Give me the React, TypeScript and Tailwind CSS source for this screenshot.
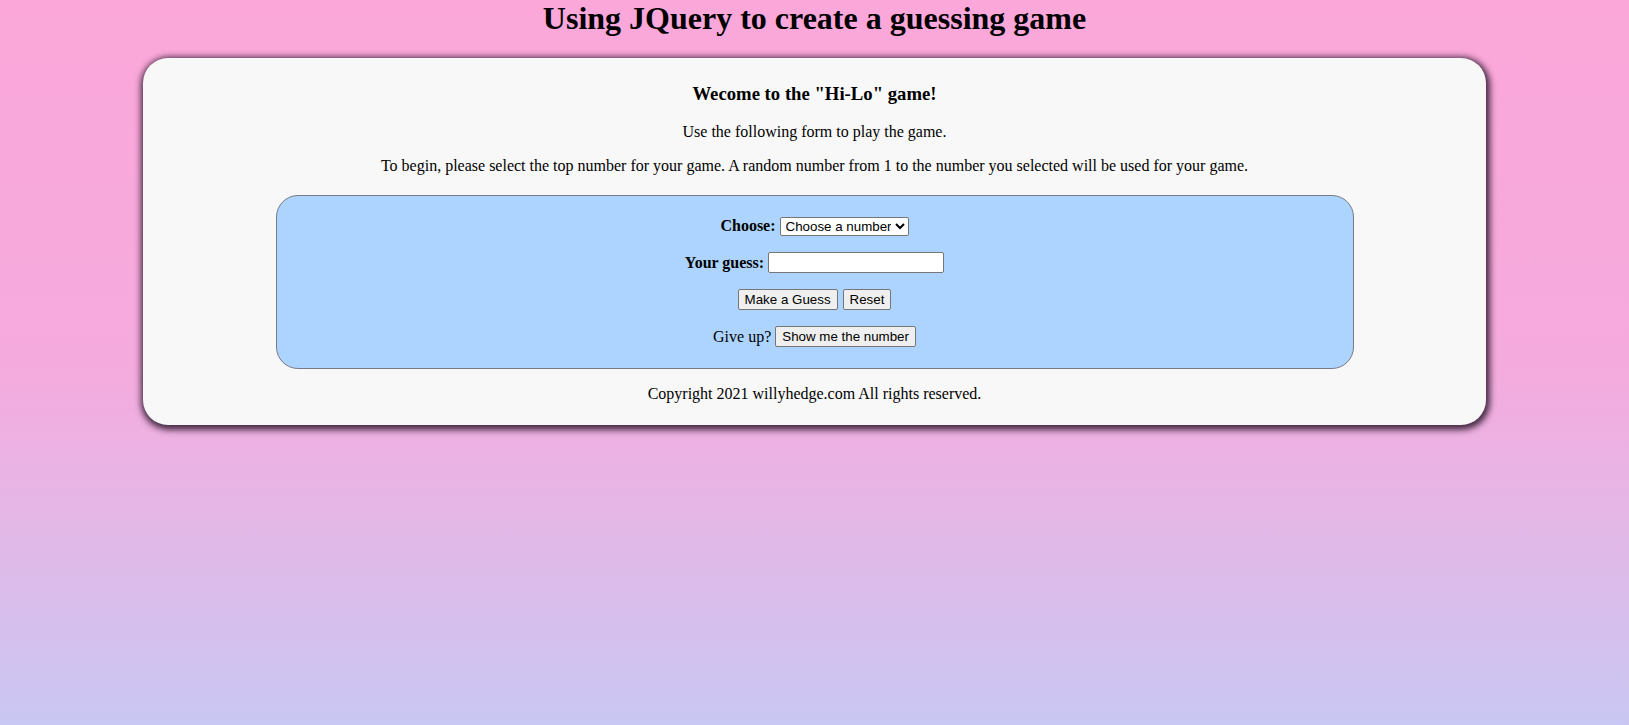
export default function App() {
  return (
    <div className="min-h-[725px] w-full bg-gradient-to-b from-[#fba7da] via-[#f5aadd] to-[#c9c7f3] font-['Liberation_Serif',serif] text-black">
      <h1 className="text-center text-[32px] font-bold leading-[37px] m-0 pb-[21px]">
        Using JQuery to create a guessing game
      </h1>

      <div className="mx-auto w-[1343px] rounded-[25px] bg-[#f8f8f8] px-[5px] pb-[6px] pt-[7px] text-center shadow-[1px_2px_6px_3px_rgba(40,20,40,0.85)]">
        <h3 className="my-[18px] text-[18.72px] font-bold leading-[22px]">
          Wecome to the "Hi-Lo" game!
        </h3>
        <p className="my-4 text-base leading-[18px]">Use the following form to play the game.</p>
        <p className="my-4 text-base leading-[18px]">
          To begin, please select the top number for your game. A random number from 1 to the number you
          selected will be used for your game.
        </p>

        <form className="mx-auto mt-[20px] w-[1078px] rounded-[22px] border border-[#767b86] bg-[#add4fe] pb-[5px] pt-[4px]">
          <p className="my-4 flex items-center justify-center gap-[4px] leading-[20px]">
            <label className="font-bold">Choose:</label>
            <select className="h-[19px] w-[129px] rounded-[2px] border border-[#767676] bg-white px-[1px] font-['Liberation_Sans',Arial,sans-serif] text-[13.33px] text-black">
              <option>Choose a number</option>
              <option>10</option>
              <option>100</option>
              <option>1000</option>
            </select>
          </p>
          <p className="my-4 flex items-center justify-center gap-[4px] leading-[20px]">
            <label className="font-bold">Your guess:</label>
            <input
              type="text"
              className="h-[21px] w-[176px] rounded-[2px] border border-[#767676] bg-white px-[2px] font-['Liberation_Sans',Arial,sans-serif] text-[13.33px]"
            />
          </p>
          <p className="my-4 flex items-center justify-center gap-[5px] leading-[20px]">
            <button
              type="button"
              className="h-[21px] rounded-[2px] border border-[#767676] bg-[#efefef] px-[6px] font-['Liberation_Sans',Arial,sans-serif] text-[13.33px] leading-[17px]"
            >
              Make a Guess
            </button>
            <button
              type="button"
              className="h-[21px] rounded-[2px] border border-[#767676] bg-[#efefef] px-[6px] font-['Liberation_Sans',Arial,sans-serif] text-[13.33px] leading-[17px]"
            >
              Reset
            </button>
          </p>
          <p className="my-4 flex items-center justify-center gap-[4px] leading-[20px]">
            <span>Give up?</span>
            <button
              type="button"
              className="h-[21px] rounded-[2px] border border-[#767676] bg-[#efefef] px-[6px] font-['Liberation_Sans',Arial,sans-serif] text-[13.33px] leading-[17px]"
            >
              Show me the number
            </button>
          </p>
        </form>

        <p className="mb-4 mt-[16px] text-base leading-[18px]">Copyright 2021 willyhedge.com All rights reserved.</p>
      </div>
    </div>
  );
}
